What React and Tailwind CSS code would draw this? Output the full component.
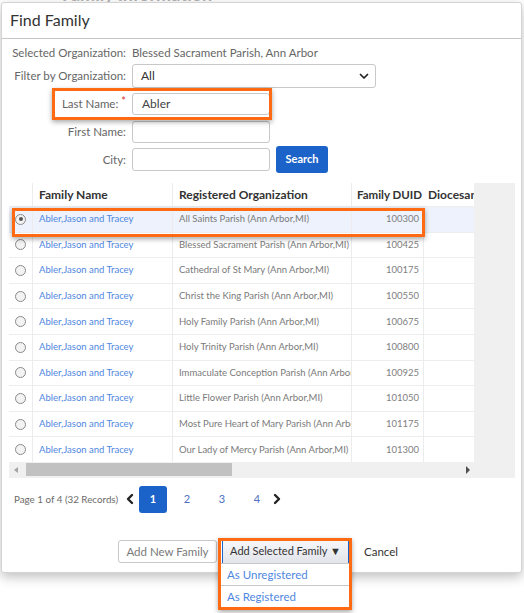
import React from "react";

const rows = [
  { org: "All Saints Parish (Ann Arbor,MI)", duid: "100300", selected: true },
  { org: "Blessed Sacrament Parish (Ann Arbor,MI)", duid: "100425" },
  { org: "Cathedral of St Mary (Ann Arbor,MI)", duid: "100175" },
  { org: "Christ the King Parish (Ann Arbor,MI)", duid: "100550" },
  { org: "Holy Family Parish (Ann Arbor,MI)", duid: "100675" },
  { org: "Holy Trinity Parish (Ann Arbor,MI)", duid: "100800" },
  { org: "Immaculate Conception Parish (Ann Arbor,MI)", duid: "100925" },
  { org: "Little Flower Parish (Ann Arbor,MI)", duid: "101050" },
  { org: "Most Pure Heart of Mary Parish (Ann Arbor,MI)", duid: "101175" },
  { org: "Our Lady of Mercy Parish (Ann Arbor,MI)", duid: "101300" },
];

const Label = ({ children }) => (
  <div className="flex w-[114px] shrink-0 justify-end whitespace-nowrap text-[11.5px] text-[#666]">
    {children}
  </div>
);

const Radio = ({ checked }) => (
  <span className="flex h-[11px] w-[11px] items-center justify-center rounded-full border border-[#8a8a8a] bg-[#f3f3f3]">
    {checked && <span className="h-[4px] w-[4px] rounded-full bg-[#555]" />}
  </span>
);

export default function App() {
  return (
    <div
      className="relative h-[613px] w-[524px] overflow-hidden bg-white"
      style={{ fontFamily: "Lato, 'Open Sans', sans-serif" }}
    >
      {/* page behind the dialog */}
      <div className="h-[2px] overflow-hidden pl-[62px]">
        <div className="-mt-[19px] text-[18px] font-bold text-[#aaa]">Family Information</div>
      </div>

      {/* Dialog */}
      <div className="ml-[1px] w-[521px] rounded-[3px] border border-[#d4d4d4] bg-white shadow-[0_4px_12px_rgba(0,0,0,0.25)]">
        {/* Title */}
        <div className="flex h-[36px] items-center border-b border-[#c6c6c6] pb-[2px] pl-[8px] text-[16px] text-[#333]">
          Find Family
        </div>

        {/* Filters */}
        <div className="relative pl-[10px] pt-[7px]">
          <div className="flex h-[14px] items-center gap-[6px]">
            <Label>Selected Organization:</Label>
            <span className="whitespace-nowrap text-[11.5px] text-[#666]">Blessed Sacrament Parish, Ann Arbor</span>
          </div>
          <div className="mt-[4px] flex h-[24px] items-center gap-[6px]">
            <Label>Filter by Organization:</Label>
            <div className="flex h-[24px] w-[244px] items-center justify-between rounded-[3px] border border-[#c8c8c8] pl-[8px] pr-[5px] text-[12px] text-[#333]">
              <span>All</span>
              <svg width="12" height="12" viewBox="0 0 24 24" fill="none" stroke="#222" strokeWidth="3.5" strokeLinecap="round" strokeLinejoin="round">
                <path d="M5 9l7 7 7-7" />
              </svg>
            </div>
          </div>
          <div className="mt-[5px] flex h-[22px] items-center gap-[6px]">
            <Label>
              Last Name:<span className="ml-[3px] text-[11px] leading-none text-[#e0302a]">*</span>
            </Label>
            <div className="flex h-[22px] w-[138px] items-center rounded-[3px] border border-[#c8c8c8] pl-[9px] text-[12px] text-[#444]">
              Abler
            </div>
          </div>
          <div className="mt-[6px] flex h-[22px] items-center gap-[6px]">
            <Label>First Name:</Label>
            <div className="h-[22px] w-[138px] rounded-[3px] border border-[#c8c8c8]" />
          </div>
          <div className="mt-[3px] flex h-[27px] items-center gap-[6px]">
            <Label>City:</Label>
            <div className="h-[23px] w-[138px] rounded-[3px] border border-[#c8c8c8]" />
            <button className="h-[27px] w-[52px] rounded-[3px] bg-[#1b63c8] text-[11px] font-bold text-white">
              Search
            </button>
          </div>

          {/* annotation box */}
          <div className="absolute left-[50px] top-[49px] h-[32px] w-[220px] border-[3px] border-[#ff6a13] shadow-[0_2px_5px_rgba(0,0,0,0.35)]" />
        </div>

        {/* Grid */}
        <div className="relative ml-[7px] mt-[10px] flex w-[506px] bg-[#f0f0f0]">
          <div className="w-[467px]">
            <div className="flex h-[23px] w-[465px] items-center bg-white text-[12px] font-bold text-[#333]">
              <div className="h-full w-[23px]" />
              <div className="flex h-full w-[140px] items-center border-l border-[#ececec] pl-[6px]">Family Name</div>
              <div className="flex h-full w-[179px] items-center border-l border-[#ececec] pl-[6px]">Registered Organization</div>
              <div className="flex h-full w-[72px] items-center overflow-hidden whitespace-nowrap border-l border-[#ececec] pl-[5px] text-[11.5px]">Family DUID</div>
              <div className="flex h-full w-[51px] items-center overflow-hidden whitespace-nowrap pl-[5px]">Diocesan</div>
            </div>
            {rows.map((r) => (
              <div
                key={r.duid}
                className={`flex h-[25.6px] w-[465px] items-center border-t border-[#ededed] text-[9.5px] ${r.selected ? "bg-[#edf2fc]" : "bg-white"}`}
              >
                <div className="flex h-full w-[23px] items-center justify-center">
                  <Radio checked={r.selected} />
                </div>
                <div className="flex h-full w-[140px] items-center border-l border-[#ececec] pl-[6px] text-[#4f87e0]">
                  Abler,Jason and Tracey
                </div>
                <div className="flex h-full w-[179px] items-center overflow-hidden whitespace-nowrap border-l border-[#ececec] pl-[6px] text-[#7a7a7a]">
                  {r.org}
                </div>
                <div className="flex h-full w-[72px] items-center justify-end border-l border-[#ececec] pr-[4px] text-[#808080]">
                  {r.duid}
                </div>
                <div className="h-full w-[51px] border-l border-[#ececec]" />
              </div>
            ))}
            {/* horizontal scrollbar */}
            <div className="flex h-[16px] items-center bg-[#f0f0f0]">
              <span className="ml-[5px] h-0 w-0 border-y-[3px] border-r-[4px] border-y-transparent border-r-[#a3a3a3]" />
              <div className="ml-[8px] h-[13px] w-[206px] bg-[#c1c1c1]" />
              <span className="ml-auto mr-[6px] h-0 w-0 border-y-[4px] border-l-[4px] border-y-transparent border-l-[#505050]" />
            </div>
          </div>

          {/* selected row annotation */}
          <div className="absolute left-[3px] top-[25px] h-[29px] w-[413px] border-[3px] border-[#ff6a13] shadow-[0_2px_5px_rgba(0,0,0,0.35)]" />
        </div>

        {/* Pager */}
        <div className="ml-[12px] mt-[8px] flex h-[27px] items-center text-[9.8px]">
          <span className="whitespace-nowrap text-[#6b6b6b]">Page 1 of 4 (32 Records)</span>
          <svg className="ml-[7px]" width="10" height="12" viewBox="0 0 10 12" fill="none" stroke="#222" strokeWidth="2.4" strokeLinecap="round" strokeLinejoin="round">
            <path d="M7 2L3 6l4 4" />
          </svg>
          <span className="ml-[4px] flex h-[27px] w-[28px] items-center justify-center rounded-[3px] bg-[#1b63c8] text-[11px] font-bold text-white">1</span>
          <span className="ml-[6px] w-[28px] text-center text-[11px] text-[#4f6fc0]">2</span>
          <span className="ml-[7px] w-[28px] text-center text-[11px] text-[#4f6fc0]">3</span>
          <span className="ml-[7px] w-[28px] text-center text-[11px] text-[#4f6fc0]">4</span>
          <svg className="ml-[1px]" width="10" height="12" viewBox="0 0 10 12" fill="none" stroke="#222" strokeWidth="2.4" strokeLinecap="round" strokeLinejoin="round">
            <path d="M3 2l4 4-4 4" />
          </svg>
        </div>

        {/* Footer */}
        <div className="ml-[116px] mt-[27px] flex items-center pb-[9px] text-[11.5px]">
          <button className="h-[23px] w-[99px] rounded-[3px] border border-[#c8c8c8] bg-white text-[#7a7a7a]">
            Add New Family
          </button>
          <div className="relative ml-[5px]">
            <button className="h-[23px] w-[127px] border-x border-[#1b63c8] bg-gradient-to-b from-[#f8f8fa] to-[#e2e4ea] text-[11px] text-[#333]">
              Add Selected Family ▼
            </button>
            <div className="absolute left-[-2px] top-[23px] w-[130px] border border-[#c8c8c8] bg-white text-[#4f87e0]">
              <div className="flex h-[22px] items-center border-b border-[#c8c8c8] pl-[6px]">As Unregistered</div>
              <div className="flex h-[22px] items-center pl-[6px]">As Registered</div>
            </div>
            <div className="absolute left-[-4px] top-[-2px] h-[72px] w-[134px] border-[3px] border-[#ff6a13] shadow-[0_2px_5px_rgba(0,0,0,0.35)]" />
          </div>
          <span className="ml-[15px] text-[#333]">Cancel</span>
        </div>
      </div>
    </div>
  );
}
